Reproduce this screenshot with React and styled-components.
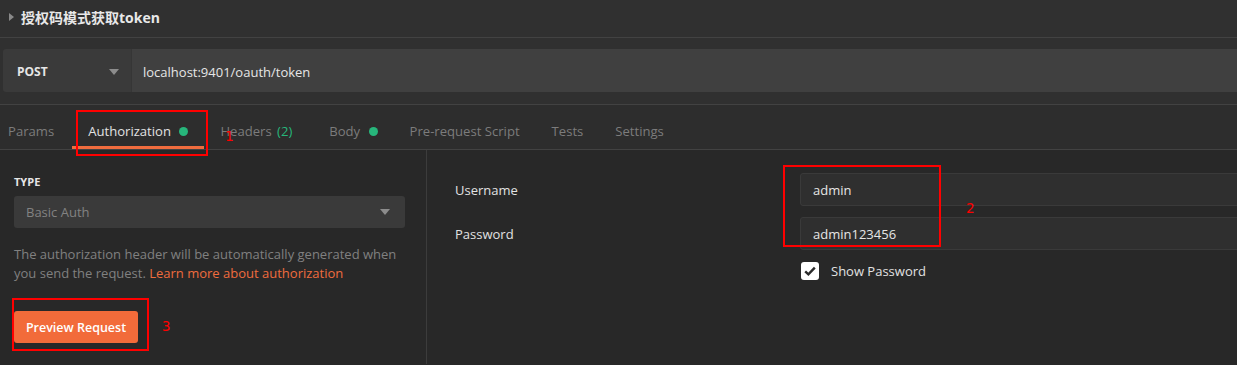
import styled, { createGlobalStyle } from "styled-components";

const GlobalStyle = createGlobalStyle`
  body {
    margin: 0;
    background: #282828;
    font-family: "Open Sans", "Noto Sans", sans-serif;
  }
`;

export default function App() {
  return (
    <StyledPage>
      <GlobalStyle />
      <StyledHeader>
        <StyledCaret />
        <StyledTitle>授权码模式获取token</StyledTitle>
      </StyledHeader>

      <StyledRequest>
        <StyledMethod>
          POST
          <StyledArrow />
        </StyledMethod>
        <StyledUrl>localhost:9401/oauth/token</StyledUrl>
      </StyledRequest>

      <StyledTabs>
        <StyledTab $first>Params</StyledTab>
        <StyledTab $active>
          Authorization <StyledDot />
        </StyledTab>
        <StyledTab>
          Headers <StyledCount>(2)</StyledCount>
        </StyledTab>
        <StyledTab>
          Body <StyledDot />
        </StyledTab>
        <StyledTab>Pre-request Script</StyledTab>
        <StyledTab>Tests</StyledTab>
        <StyledTab>Settings</StyledTab>
      </StyledTabs>

      <StyledBody>
        <StyledLeft>
          <StyledLabel>Type</StyledLabel>
          <StyledSelect>
            Basic Auth
            <StyledArrow />
          </StyledSelect>
          <StyledHelp>
            The authorization header will be automatically generated when you
            send the request. <a href="/">Learn more about authorization</a>
          </StyledHelp>
          <StyledButton>Preview Request</StyledButton>
        </StyledLeft>

        <StyledRight>
          <StyledFieldLabel>Username</StyledFieldLabel>
          <StyledInput>admin</StyledInput>
          <StyledFieldLabel>Password</StyledFieldLabel>
          <StyledInput>admin123456</StyledInput>
          <span />
          <StyledCheckRow>
            <StyledCheck>
              <svg width="14" height="14" viewBox="0 0 14 14">
                <path
                  d="M2.2 7.4 L5.4 10.4 L11.8 3.6"
                  fill="none"
                  stroke="#2a2a2a"
                  strokeWidth="2.4"
                />
              </svg>
            </StyledCheck>
            Show Password
          </StyledCheckRow>
        </StyledRight>
      </StyledBody>

      <StyledMark $x={76} $y={110} $w={132} $h={46} />
      <StyledNum $x={225} $y={128}>1</StyledNum>
      <StyledMark $x={783} $y={165} $w={158} $h={82} />
      <StyledNum $x={966} $y={200}>2</StyledNum>
      <StyledMark $x={12} $y={298} $w={137} $h={53} />
      <StyledNum $x={162} $y={318}>3</StyledNum>
    </StyledPage>
  );
}

const StyledPage = styled.div`
  position: relative;
  width: 1237px;
  height: 365px;
  overflow: hidden;
  background: #282828;
`;

const StyledHeader = styled.div`
  height: 38px;
  background: #303030;
  border-bottom: 1px solid #424242;
  display: flex;
  align-items: center;
  padding-left: 9px;
  gap: 7px;
  padding-bottom: 4px;
  box-sizing: border-box;
`;

const StyledCaret = styled.span`
  width: 0;
  height: 0;
  border-top: 4px solid transparent;
  border-bottom: 4px solid transparent;
  border-left: 5px solid #8a8a8a;
`;

const StyledTitle = styled.div`
  font-family: "Open Sans", "Noto Sans CJK SC", sans-serif;
  font-weight: 700;
  font-size: 14px;
  color: #e8e8e8;
`;

const StyledRequest = styled.div`
  height: 67px;
  box-sizing: border-box;
  background: #303030;
  border-bottom: 1px solid #424242;
  padding: 11px 0 12px 3px;
  display: flex;
`;

const StyledMethod = styled.div`
  width: 128px;
  flex-shrink: 0;
  background: #3a3a3a;
  border-radius: 3px 0 0 3px;
  display: flex;
  align-items: center;
  justify-content: space-between;
  padding: 2px 12px 0 14px;
  box-sizing: border-box;
  font-size: 12px;
  font-weight: 700;
  color: #e6e6e6;
`;

const StyledArrow = styled.span`
  width: 0;
  height: 0;
  border-left: 5px solid transparent;
  border-right: 5px solid transparent;
  border-top: 6px solid #8c8c8c;
`;

const StyledUrl = styled.div`
  flex: 1;
  background: #404040;
  border-left: 1px solid #363636;
  display: flex;
  align-items: center;
  padding: 2px 0 0 11px;
  font-size: 13px;
  color: #e6e6e6;
`;

const StyledTabs = styled.div`
  height: 45px;
  box-sizing: border-box;
  background: #2d2d2d;
  border-bottom: 1px solid #424242;
  display: flex;
  margin-left: -8px;
`;

const StyledTab = styled.div`
  display: flex;
  align-items: center;
  gap: 5px;
  padding: 11px ${(p) => (p.$first ? 18 : 16)}px 0 16px;
  font-size: 13.1px;
  color: ${(p) => (p.$active ? "#e2e2e2" : "#7c7c7c")};
  border-bottom: 3px solid ${(p) => (p.$active ? "#ef6c3e" : "transparent")};
  white-space: pre;
`;

const StyledDot = styled.span`
  width: 9px;
  height: 9px;
  border-radius: 50%;
  background: #27b67b;
`;

const StyledCount = styled.span`
  color: #27b67b;
  margin: 0 5px 0 -3px;
`;

const StyledBody = styled.div`
  display: grid;
  grid-template-columns: 427px 1fr;
  height: 214px;
`;

const StyledLeft = styled.div`
  border-right: 1px solid #3c3c3c;
  padding: 25px 22px 0 14px;
  display: flex;
  flex-direction: column;
  align-items: flex-start;
`;

const StyledLabel = styled.div`
  font-size: 11px;
  font-weight: 700;
  text-transform: uppercase;
  color: #e6e6e6;
  line-height: 14px;
`;

const StyledSelect = styled.div`
  margin-top: 7px;
  width: 391px;
  height: 32px;
  box-sizing: border-box;
  background: #3a3a3a;
  border-radius: 3px;
  display: flex;
  align-items: center;
  justify-content: space-between;
  padding: 0 15px 0 12px;
  font-size: 13px;
  color: #828282;
`;

const StyledHelp = styled.p`
  margin: 17px 0 0;
  font-size: 13px;
  line-height: 19px;
  color: #808080;
  a {
    color: #ef6c3e;
    text-decoration: none;
  }
`;

const StyledButton = styled.button`
  margin-top: 28px;
  width: 124px;
  height: 32px;
  border: none;
  border-radius: 3px;
  background: #f26b3a;
  color: #ffffff;
  font-family: "Open Sans", sans-serif;
  font-weight: 600;
  font-size: 12.5px;
  padding: 0;
`;

const StyledRight = styled.div`
  display: grid;
  grid-template-columns: 345px 1fr;
  grid-auto-rows: min-content;
  row-gap: 11px;
  padding: 23px 0 0 28px;
  margin-right: -20px;
  align-items: center;
`;

const StyledFieldLabel = styled.div`
  font-size: 13px;
  color: #e2e2e2;
`;

const StyledInput = styled.div`
  height: 33px;
  box-sizing: border-box;
  background: #2f2f2f;
  border: 1px solid #3a3a3a;
  border-radius: 3px;
  display: flex;
  align-items: center;
  padding-left: 12px;
  font-size: 13px;
  color: #e6e6e6;
`;

const StyledCheckRow = styled.div`
  display: flex;
  align-items: center;
  gap: 12px;
  margin-top: 1px;
  padding-left: 1px;
  font-size: 13px;
  color: #e2e2e2;
`;

const StyledCheck = styled.span`
  width: 18px;
  height: 18px;
  border-radius: 3px;
  background: #ffffff;
  display: flex;
  align-items: center;
  justify-content: center;
`;

const StyledMark = styled.div`
  position: absolute;
  left: ${(p) => p.$x}px;
  top: ${(p) => p.$y}px;
  width: ${(p) => p.$w}px;
  height: ${(p) => p.$h}px;
  border: 2px solid #ff0000;
  box-sizing: border-box;
  pointer-events: none;
`;

const StyledNum = styled.span`
  position: absolute;
  left: ${(p) => p.$x}px;
  top: ${(p) => p.$y}px;
  font-family: "DejaVu Sans Mono", monospace;
  font-size: 14px;
  color: #ff0000;
`;
